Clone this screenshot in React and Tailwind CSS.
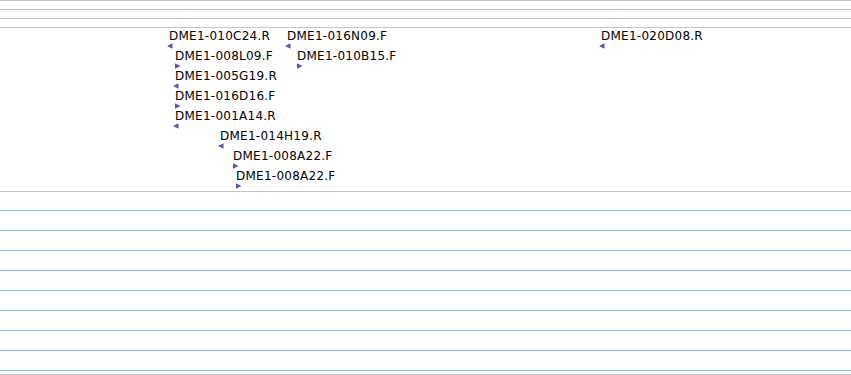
import React from "react";

const labels = [
  { t: "DME1-010C24.R", x: 169, y: 28, d: "L" },
  { t: "DME1-016N09.F", x: 287, y: 28, d: "L" },
  { t: "DME1-008L09.F", x: 175, y: 48, d: "R" },
  { t: "DME1-010B15.F", x: 297, y: 48, d: "R" },
  { t: "DME1-005G19.R", x: 175, y: 68, d: "L" },
  { t: "DME1-016D16.F", x: 175, y: 88, d: "R" },
  { t: "DME1-001A14.R", x: 175, y: 108, d: "L" },
  { t: "DME1-014H19.R", x: 220, y: 128, d: "L" },
  { t: "DME1-008A22.F", x: 233, y: 148, d: "R" },
  { t: "DME1-008A22.F", x: 236, y: 168, d: "R" },
  { t: "DME1-020D08.R", x: 601, y: 28, d: "L" },
];

function Tri({ d }) {
  return (
    <svg width="6" height="6" viewBox="0 0 6 6" className="block">
      {d === "L" ? (
        <polygon points="0,3 5.5,0.3 5.5,5.7" fill="#6a4db3" />
      ) : (
        <polygon points="0,0.3 5.5,3 0,5.7" fill="#6a4db3" />
      )}
    </svg>
  );
}

export default function App() {
  const blue = Array.from({ length: 8 });
  return (
    <div className="w-[851px] h-[375px] bg-white overflow-hidden" style={{ fontFamily: "'DejaVu Sans', sans-serif" }}>
      <div className="h-[9px] border-t border-[#c4c4c4]" />
      <div className="h-[9px] border-t border-[#c4c4c4]" />
      <div className="h-[9px] border-t border-[#c4c4c4]" />
      <div className="relative h-[164px] border-t border-[#c4c4c4]">
        {labels.map((l, i) => (
          <div
            key={i}
            className="absolute flex flex-col items-start"
            style={{ left: l.x, top: l.y - 27 }}
          >
            <span className="text-[12px] leading-[14px] tracking-[0.25px] text-black whitespace-nowrap">{l.t}</span>
            <div className={l.d === "L" ? "-ml-[2px]" : "ml-0"}>
              <Tri d={l.d} />
            </div>
          </div>
        ))}
      </div>
      <div className="h-[19px] border-t border-[#c4c4c4]" />
      {blue.map((_, i) => (
        <div key={i} className="h-[20px] border-t border-[#85bde8]" />
      ))}
      <div className="h-[4px] border-t border-[#85bde8]" />
      <div className="h-[1px] border-t border-[#c4c4c4]" />
    </div>
  );
}
